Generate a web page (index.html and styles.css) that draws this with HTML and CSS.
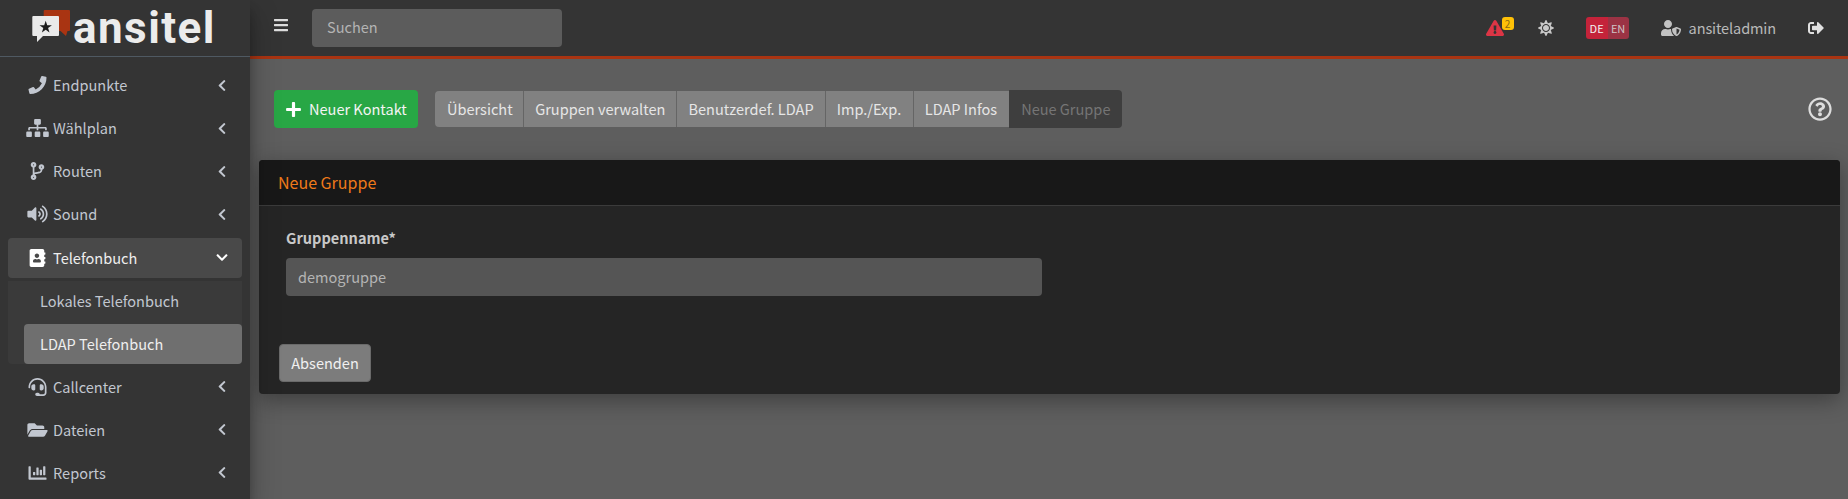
FILE: index.html
```html
<!DOCTYPE html>
<html lang="de">
<head>
<meta charset="utf-8">
<title>ansitel</title>
<link rel="stylesheet" href="styles.css">
</head>
<body>
<svg class="defs" aria-hidden="true">
  <symbol id="i-phone" viewBox="0 0 512 512"><path transform="matrix(-1 0 0 1 512 0)" d="M497.39 361.8l-112-48a24 24 0 0 0-28 6.9l-49.6 60.6A370.66 370.66 0 0 1 130.6 204.11l60.6-49.6a23.94 23.94 0 0 0 6.9-28l-48-112A24.16 24.16 0 0 0 122.6.61l-104 24A24 24 0 0 0 0 48c0 256.5 207.9 464 464 464a24 24 0 0 0 23.4-18.6l24-104a24.29 24.29 0 0 0-14.01-27.6z"/></symbol>
  <symbol id="i-sitemap" viewBox="0 0 640 512"><path d="M128 352H32c-17.67 0-32 14.33-32 32v96c0 17.67 14.33 32 32 32h96c17.67 0 32-14.33 32-32v-96c0-17.67-14.33-32-32-32zm-24-80h192v48h48v-48h192v48h48v-57.59c0-21.17-17.23-38.41-38.41-38.41H344v-64h40c17.67 0 32-14.33 32-32V32c0-17.67-14.33-32-32-32H256c-17.67 0-32 14.33-32 32v96c0 17.67 14.33 32 32 32h40v64H94.41C73.23 224 56 241.23 56 262.41V320h48v-48zm264 80h-96c-17.67 0-32 14.33-32 32v96c0 17.67 14.33 32 32 32h96c17.67 0 32-14.33 32-32v-96c0-17.67-14.33-32-32-32zm240 0h-96c-17.67 0-32 14.33-32 32v96c0 17.67 14.33 32 32 32h96c17.67 0 32-14.33 32-32v-96c0-17.67-14.33-32-32-32z"/></symbol>
  <symbol id="i-branch" viewBox="0 0 384 512"><path d="M384 144c0-44.2-35.8-80-80-80s-80 35.8-80 80c0 36.4 24.3 67.1 57.5 76.8-.6 16.1-4.2 28.5-11 36.9-15.4 19.2-49.3 22.4-85.2 25.7-28.2 2.6-57.4 5.4-81.3 16.9v-144c32.5-10.2 56-40.5 56-76.3 0-44.2-35.8-80-80-80S0 35.8 0 80c0 35.8 23.5 66.1 56 76.3v199.3C23.5 365.9 0 396.2 0 432c0 44.2 35.8 80 80 80s80-35.8 80-80c0-34-21.2-63.1-51.2-74.6 3.1-5.2 7.8-9.8 14.9-13.4 16.2-8.2 40.4-10.4 66.1-12.8 42.2-3.9 90-8.4 118.2-43.4 14-17.4 21.1-39.8 21.6-67.9 31.6-10.8 54.4-40.7 54.4-75.9zM80 64c8.8 0 16 7.2 16 16s-7.2 16-16 16-16-7.2-16-16 7.2-16 16-16zm0 384c-8.8 0-16-7.2-16-16s7.2-16 16-16 16 7.2 16 16-7.2 16-16 16zm224-320c8.8 0 16 7.2 16 16s-7.2 16-16 16-16-7.2-16-16 7.2-16 16-16z"/></symbol>
  <symbol id="i-volume" viewBox="0 0 576 512"><path d="M215.03 71.05L126.06 160H24c-13.26 0-24 10.74-24 24v144c0 13.25 10.74 24 24 24h102.06l88.97 88.95c15.03 15.03 40.97 4.47 40.97-16.97V88.02c0-21.46-25.96-32-40.97-16.97zm233.32-51.08c-11.17-7.33-26.18-4.24-33.51 6.95-7.34 11.17-4.22 26.18 6.95 33.51 66.27 43.49 105.82 116.6 105.82 195.58 0 78.98-39.55 152.09-105.82 195.58-11.17 7.32-14.29 22.34-6.95 33.5 7.04 10.71 21.93 14.56 33.51 6.95C528.27 439.58 576 351.33 576 256S528.27 72.43 448.35 19.97zM480 256c0-63.53-32.06-121.94-85.77-156.24-11.19-7.14-26.03-3.82-33.12 7.46s-3.78 26.21 7.41 33.36C408.27 165.97 432 209.11 432 256s-23.73 90.03-63.48 115.42c-11.19 7.14-14.5 22.07-7.41 33.36 6.51 10.36 21.12 15.14 33.12 7.46C447.94 377.94 480 319.54 480 256zm-141.77-76.87c-11.58-6.33-26.19-2.16-32.61 9.45-6.39 11.61-2.16 26.2 9.45 32.61C327.98 228.28 336 241.63 336 256c0 14.38-8.02 27.72-20.92 34.81-11.61 6.41-15.84 21-9.45 32.61 6.43 11.66 21.05 15.8 32.61 9.45 28.23-15.55 45.77-45 45.77-76.88s-17.54-61.32-45.78-76.86z"/></symbol>
  <symbol id="i-book" viewBox="0 0 448 512"><path d="M436 160c6.6 0 12-5.4 12-12v-40c0-6.6-5.4-12-12-12h-20V48c0-26.5-21.5-48-48-48H48C21.5 0 0 21.5 0 48v416c0 26.5 21.5 48 48 48h320c26.5 0 48-21.5 48-48v-48h20c6.6 0 12-5.4 12-12v-40c0-6.6-5.4-12-12-12h-20v-64h20c6.6 0 12-5.4 12-12v-40c0-6.6-5.4-12-12-12h-20v-64h20zm-228-32c35.3 0 64 28.7 64 64s-28.7 64-64 64-64-28.7-64-64 28.7-64 64-64zm112 236.8c0 10.6-10 19.2-22.4 19.2H118.4C106 384 96 375.4 96 364.8v-19.2c0-31.8 30.1-57.6 67.2-57.6h5c12.3 5.1 25.7 8 39.8 8s27.6-2.9 39.8-8h5c37.1 0 67.2 25.8 67.2 57.6v19.2z"/></symbol>
  <symbol id="i-headset" viewBox="0 0 512 512"><path d="M192 208c0-17.67-14.33-32-32-32h-16c-35.35 0-64 28.65-64 64v48c0 35.35 28.65 64 64 64h16c17.67 0 32-14.33 32-32V208zm176 144c35.35 0 64-28.65 64-64v-48c0-35.35-28.65-64-64-64h-16c-17.67 0-32 14.33-32 32v112c0 17.67 14.33 32 32 32h16zM256 0C113.18 0 4.58 118.83 0 256v16c0 8.84 7.16 16 16 16h16c8.84 0 16-7.16 16-16v-16c0-114.69 93.31-208 208-208s208 93.31 208 208h-.12c.08 2.43.12 165.72.12 165.72 0 23.35-18.93 42.28-42.28 42.28H320c0-26.51-21.49-48-48-48h-32c-26.51 0-48 21.49-48 48s21.49 48 48 48h181.72c49.86 0 90.28-40.42 90.28-90.28V256C507.42 118.83 398.82 0 256 0z"/></symbol>
  <symbol id="i-folder" viewBox="0 0 576 512"><path d="M572.694 292.093L500.27 416.248A63.997 63.997 0 0 1 444.989 448H45.025c-18.523 0-30.064-20.093-20.731-36.093l72.424-124.155A64 64 0 0 1 152 256h399.964c18.523 0 30.064 20.093 20.73 36.093zM152 224h328v-48c0-26.51-21.49-48-48-48H272l-64-64H48C21.49 64 0 85.49 0 112v278.046l69.077-118.418C86.214 242.25 117.989 224 152 224z"/></symbol>
  <symbol id="i-chart" viewBox="0 0 512 512"><path d="M332.8 320h38.4c6.4 0 12.8-6.4 12.8-12.8V172.8c0-6.4-6.4-12.8-12.8-12.8h-38.4c-6.4 0-12.8 6.4-12.8 12.8v134.4c0 6.4 6.4 12.8 12.8 12.8zm96 0h38.4c6.4 0 12.8-6.4 12.8-12.8V76.8c0-6.4-6.4-12.8-12.8-12.8h-38.4c-6.4 0-12.8 6.4-12.8 12.8v230.4c0 6.4 6.4 12.8 12.8 12.8zm-288 0h38.4c6.4 0 12.8-6.4 12.8-12.8v-70.4c0-6.4-6.4-12.8-12.8-12.8h-38.4c-6.4 0-12.8 6.4-12.8 12.8v70.4c0 6.4 6.4 12.8 12.8 12.8zm96 0h38.4c6.4 0 12.8-6.4 12.8-12.8V108.8c0-6.4-6.4-12.8-12.8-12.8h-38.4c-6.4 0-12.8 6.4-12.8 12.8v198.4c0 6.4 6.4 12.8 12.8 12.8zM496 384H64V80c0-8.84-7.16-16-16-16H16C7.16 64 0 71.16 0 80v336c0 17.67 14.33 32 32 32h464c8.84 0 16-7.16 16-16v-32c0-8.84-7.16-16-16-16z"/></symbol>
  <symbol id="i-left" viewBox="0 0 320 512"><path d="M34.52 239.03L228.87 44.69c9.37-9.37 24.57-9.37 33.94 0l22.67 22.67c9.36 9.36 9.37 24.52.04 33.9L131.49 256l154.02 154.75c9.34 9.38 9.32 24.54-.04 33.9l-22.67 22.67c-9.37 9.37-24.57 9.37-33.94 0L34.52 272.97c-9.37-9.37-9.37-24.57 0-33.94z"/></symbol>
  <symbol id="i-down" viewBox="0 0 448 512"><path d="M207.029 381.476L12.686 187.132c-9.373-9.373-9.373-24.569 0-33.941l22.667-22.667c9.357-9.357 24.522-9.375 33.901-.04L224 284.505l154.745-154.021c9.379-9.335 24.544-9.317 33.901.04l22.667 22.667c9.373 9.373 9.373 24.569 0 33.941L240.971 381.476c-9.373 9.372-24.569 9.372-33.942 0z"/></symbol>
  <symbol id="i-bars" viewBox="0 0 448 512"><path d="M16 132h416c8.837 0 16-7.163 16-16V76c0-8.837-7.163-16-16-16H16C7.163 60 0 67.163 0 76v40c0 8.837 7.163 16 16 16zm0 160h416c8.837 0 16-7.163 16-16v-40c0-8.837-7.163-16-16-16H16c-8.837 0-16 7.163-16 16v40c0 8.837 7.163 16 16 16zm0 160h416c8.837 0 16-7.163 16-16v-40c0-8.837-7.163-16-16-16H16c-8.837 0-16 7.163-16 16v40c0 8.837 7.163 16 16 16z"/></symbol>
  <symbol id="i-plus" viewBox="0 0 448 512"><path d="M416 208H272V64c0-17.67-14.33-32-32-32h-32c-17.67 0-32 14.33-32 32v144H32c-17.67 0-32 14.33-32 32v32c0 17.67 14.33 32 32 32h144v144c0 17.67 14.33 32 32 32h32c17.67 0 32-14.33 32-32V304h144c17.67 0 32-14.33 32-32v-32c0-17.67-14.33-32-32-32z"/></symbol>
  <symbol id="i-warn" viewBox="0 0 576 512"><path d="M569.517 440.013C587.975 472.007 564.806 512 527.94 512H48.054c-36.937 0-59.999-40.055-41.577-71.987L246.423 23.985c18.467-32.009 64.72-31.951 83.154 0l239.94 416.028zM288 354c-25.405 0-46 20.595-46 46s20.595 46 46 46 46-20.595 46-46-20.595-46-46-46zm-43.673-165.346l7.418 136c.347 6.364 5.609 11.346 11.982 11.346h48.546c6.373 0 11.635-4.982 11.982-11.346l7.418-136c.375-6.874-5.098-12.654-11.982-12.654h-63.383c-6.884 0-12.356 5.78-11.981 12.654z"/></symbol>
  <symbol id="i-sun" viewBox="0 0 512 512"><path d="M256 160c-52.9 0-96 43.1-96 96s43.1 96 96 96 96-43.1 96-96-43.1-96-96-96zm246.4 80.5l-94.7-47.3 33.5-100.4c4.5-13.6-8.4-26.5-21.9-21.9l-100.4 33.5-47.4-94.8c-6.4-12.8-24.6-12.8-31 0l-47.3 94.7L92.7 70.8c-13.6-4.5-26.5 8.4-21.9 21.9l33.5 100.4-94.7 47.4c-12.8 6.4-12.8 24.6 0 31l94.7 47.3-33.5 100.5c-4.5 13.6 8.4 26.5 21.9 21.9l100.4-33.5 47.3 94.7c6.4 12.8 24.6 12.8 31 0l47.3-94.7 100.4 33.5c13.6 4.5 26.5-8.4 21.9-21.9l-33.5-100.4 94.7-47.3c13-6.5 13-24.7.2-31.1zm-155.9 106c-49.9 49.9-131.1 49.9-181 0-49.9-49.9-49.9-131.1 0-181 49.9-49.9 131.1-49.9 181 0 49.9 49.9 49.9 131.1 0 181z"/></symbol>
  <symbol id="i-user" viewBox="0 0 640 512"><path d="M622.3 271.1l-115.2-45c-4.1-1.6-12.6-3.7-22.2 0l-115.2 45c-10.7 4.2-17.7 14-17.7 24.9 0 111.6 68.7 188.8 132.9 213.9 9.6 3.7 18 1.6 22.2 0C558.4 489.9 640 420.5 640 296c0-10.9-7-20.7-17.7-24.9zM496 462.4V273.3l95.5 37.3c-5.6 87.1-60.9 135.4-95.5 151.8zM224 256c70.7 0 128-57.3 128-128S294.7 0 224 0 96 57.3 96 128s57.3 128 128 128zm96 40c0-2.5.8-4.8 1.1-7.2-2.5-.1-4.9-.8-7.5-.8h-16.7c-22.2 10.2-46.9 16-72.9 16s-50.6-5.8-72.9-16h-16.7C60.2 288 0 348.2 0 422.4V464c0 26.5 21.5 48 48 48h352c6.8 0 13.3-1.5 19.1-4-54-42.9-99.1-116.7-99.1-212z"/></symbol>
  <symbol id="i-out" viewBox="0 0 512 512"><path d="M497 273L329 441c-15 15-41 4.5-41-17v-96H152c-13.3 0-24-10.7-24-24v-96c0-13.3 10.7-24 24-24h136V88c0-21.4 25.9-32 41-17l168 168c9.3 9.4 9.3 24.6 0 34zM192 436v-40c0-6.6-5.4-12-12-12H96c-17.7 0-32-14.3-32-32V160c0-17.7 14.3-32 32-32h84c6.6 0 12-5.4 12-12V76c0-6.6-5.4-12-12-12H96c-53 0-96 43-96 96v192c0 53 43 96 96 96h84c6.6 0 12-5.4 12-12z"/></symbol>
  <symbol id="i-help" viewBox="0 0 512 512"><path d="M256 8C119.043 8 8 119.083 8 256c0 136.997 111.043 248 248 248s248-111.003 248-248C504 119.083 392.957 8 256 8zm0 448c-110.532 0-200-89.431-200-200 0-110.495 89.472-200 200-200 110.491 0 200 89.471 200 200 0 110.53-89.431 200-200 200zm107.244-255.2c0 67.052-72.421 68.084-72.421 92.863V300c0 6.627-5.373 12-12 12h-45.647c-6.627 0-12-5.373-12-12v-8.659c0-35.745 27.1-50.034 47.579-61.516 17.561-9.845 28.324-16.541 28.324-29.579 0-17.246-21.999-28.693-39.784-28.693-23.189 0-33.894 10.977-48.942 29.969-4.057 5.12-11.46 6.071-16.666 2.124l-27.824-21.098c-5.107-3.872-6.251-11.066-2.644-16.363C184.846 131.491 214.94 112 261.794 112c49.071 0 101.45 38.304 101.45 88.8zM298 368c0 23.159-18.841 42-42 42s-42-18.841-42-42 18.841-42 42-42 42 18.841 42 42z"/></symbol>
</svg>
<div class="app">
  <aside class="sidebar">
    <a class="brand">
      <svg class="brand-mark" viewBox="0 0 40 34">
        <path class="mark-back" d="M12.7 0H37a1 1 0 0 1 1 1v19a1 1 0 0 1-1 1h-1.5l-1.5 5-5.5-5H11.7V1a1 1 0 0 1 1-1z"/>
        <path class="mark-front" d="M1.3 6H26a1 1 0 0 1 1 1v18a1 1 0 0 1-1 1H11l-6 6v-6H1.3a1 1 0 0 1-1-1V7a1 1 0 0 1 1-1z"/>
        <polygon class="mark-star" points="13.7,10.8 15.2,15.3 19.9,15.3 16.1,18.1 17.5,22.6 13.7,19.8 9.9,22.6 11.3,18.1 7.5,15.3 12.2,15.3"/>
      </svg>
      <span class="brand-text">ansitel</span>
    </a>
    <nav class="menu">
      <a class="menu-link"><svg class="menu-icon"><use href="#i-phone"/></svg><span class="menu-text">Endpunkte</span><svg class="chev"><use href="#i-left"/></svg></a>
      <a class="menu-link"><svg class="menu-icon"><use href="#i-sitemap"/></svg><span class="menu-text">Wählplan</span><svg class="chev"><use href="#i-left"/></svg></a>
      <a class="menu-link"><svg class="menu-icon"><use href="#i-branch"/></svg><span class="menu-text">Routen</span><svg class="chev"><use href="#i-left"/></svg></a>
      <a class="menu-link"><svg class="menu-icon"><use href="#i-volume"/></svg><span class="menu-text">Sound</span><svg class="chev"><use href="#i-left"/></svg></a>
      <a class="menu-link open"><svg class="menu-icon"><use href="#i-book"/></svg><span class="menu-text">Telefonbuch</span><svg class="chev-down"><use href="#i-down"/></svg></a>
      <div class="submenu">
        <a class="sub-link">Lokales Telefonbuch</a>
        <a class="sub-link active">LDAP Telefonbuch</a>
      </div>
      <a class="menu-link"><svg class="menu-icon"><use href="#i-headset"/></svg><span class="menu-text">Callcenter</span><svg class="chev"><use href="#i-left"/></svg></a>
      <a class="menu-link"><svg class="menu-icon"><use href="#i-folder"/></svg><span class="menu-text">Dateien</span><svg class="chev"><use href="#i-left"/></svg></a>
      <a class="menu-link"><svg class="menu-icon"><use href="#i-chart"/></svg><span class="menu-text">Reports</span><svg class="chev"><use href="#i-left"/></svg></a>
    </nav>
  </aside>
  <div class="main">
    <header class="topbar">
      <svg class="burger"><use href="#i-bars"/></svg>
      <div class="search">Suchen</div>
      <div class="top-right">
        <div class="alert">
          <svg class="alert-icon"><use href="#i-warn"/></svg>
          <span class="badge">2</span>
        </div>
        <svg class="sun"><use href="#i-sun"/></svg>
        <div class="lang"><span class="lang-on">DE</span><span class="lang-off">EN</span></div>
        <svg class="user-icon"><use href="#i-user"/></svg>
        <span class="user-name">ansiteladmin</span>
        <svg class="logout"><use href="#i-out"/></svg>
      </div>
    </header>
    <main class="content">
      <div class="toolbar">
        <a class="btn-add"><svg class="plus"><use href="#i-plus"/></svg>Neuer Kontakt</a>
        <div class="btn-group">
          <a class="tab">Übersicht</a>
          <a class="tab">Gruppen verwalten</a>
          <a class="tab">Benutzerdef. LDAP</a>
          <a class="tab">Imp./Exp.</a>
          <a class="tab">LDAP Infos</a>
          <a class="tab disabled">Neue Gruppe</a>
        </div>
        <svg class="help"><use href="#i-help"/></svg>
      </div>
      <section class="card">
        <h3 class="card-title">Neue Gruppe</h3>
        <div class="card-body">
          <label class="field-label">Gruppenname*</label>
          <div class="field">demogruppe</div>
        </div>
        <div class="card-footer"><a class="btn-submit">Absenden</a></div>
      </section>
    </main>
  </div>
</div>
</body>
</html>
```

FILE: styles.css
```css
* { box-sizing: border-box; }
html, body { margin: 0; height: 100%; overflow: hidden; }
body {
  font-family: "Noto Sans CJK JP", "Noto Sans", sans-serif;
  font-size: 14.55px;
  line-height: 24px;
  color: #d8d8d8;
  background: #5e5e5e;
}
.defs { display: none; }
svg { fill: currentColor; display: block; flex: none; }

.app { display: flex; height: 100vh; }

/* sidebar */
.sidebar {
  width: 250px;
  flex: none;
  background: #343434;
  position: relative;
  z-index: 2;
  box-shadow: 0 14px 28px rgba(0,0,0,.25), 0 10px 10px rgba(0,0,0,.22);
}
.brand {
  height: 57px;
  border-bottom: 1px solid #4f5962;
  display: flex;
  align-items: flex-start;
  padding: 10px 0 0 32px;
}
.brand-mark { width: 40px; height: 34px; }
.mark-back { fill: #a93412; }
.mark-front { fill: #eaeaea; }
.mark-star { fill: #1b1b1b; }
.brand-text {
  font-family: "Roboto", "Liberation Sans", sans-serif;
  font-weight: 700;
  font-size: 44px;
  line-height: 36px;
  color: #ececec;
  margin-left: 1px;
  letter-spacing: 1.45px;
}
.menu { padding: 8.13px 8px 0; display: flex; flex-direction: column; gap: 3.1px; }
.menu-link {
  height: 40px;
  flex: none;
  display: flex;
  align-items: center;
  padding-left: 18px;
  border-radius: 4px;
  color: #c2c7d0;
}
.menu-icon { width: 23px; height: 18px; margin-right: 4px; }
.menu-text { flex: 1; }
.chev { width: 12px; height: 13px; margin-right: 14px; }
.chev-down { width: 12px; height: 13px; margin-right: 14px; color: #fff; }
.menu-link.open { background: #494949; color: #eee; }
.menu-link.open .menu-icon { color: #fff; }
.submenu {
  display: flex;
  flex-direction: column;
  gap: 3.1px;
  background: #3a3a3a;
  padding-left: 16px;
  border-radius: 0 0 4px 4px;
}
.sub-link {
  height: 40px;
  flex: none;
  display: flex;
  align-items: center;
  padding-left: 16px;
  border-radius: 4px;
  color: #c2c7d0;
}
.sub-link.active { background: #6f6f6f; color: #eee; }

/* main */
.main { flex: 1; min-width: 0; display: flex; flex-direction: column; }
.topbar {
  height: 59px;
  flex: none;
  background: #343434;
  border-bottom: 3px solid #a93412;
  display: flex;
  align-items: center;
  padding: 0 24px;
}
.burger { width: 14px; height: 16px; color: #ddd; margin-top: -7px; }
.search {
  width: 250px;
  height: 38px;
  margin-left: 24px;
  background: #5c5c5c;
  border-radius: 4px;
  padding: 6px 15px;
  color: #b4b4b4;
}
.top-right { margin-left: auto; display: flex; align-items: center; }
.alert { position: relative; width: 18px; height: 16px; }
.alert-icon { width: 18px; height: 16px; color: #dc3545; }
.badge {
  position: absolute;
  left: 16px;
  top: -3px;
  width: 12px;
  height: 13px;
  background: #ffc107;
  color: #8b6d12;
  border-radius: 3px;
  font-size: 10px;
  line-height: 13px;
  text-align: center;
}
.sun { width: 16px; height: 16px; color: #c8c8c8; margin-left: 34px; }
.lang {
  display: flex;
  height: 22px;
  margin-left: 32px;
  border-radius: 3px;
  overflow: hidden;
  font-size: 11px;
  line-height: 22px;
}
.lang-on { width: 22px; text-align: center; background: #c4233a; color: #f2f2f2; }
.lang-off { width: 21px; text-align: center; background: #9b3344; color: #d0c4c6; }
.user-icon { width: 20px; height: 16px; color: #c2c2c2; margin-left: 32px; }
.user-name { margin-left: 8px; color: #b9b9b9; letter-spacing: -0.125px; }
.logout { width: 16px; height: 16px; color: #e0e0e0; margin-left: 32px; }

.content { flex: 1; padding: 31px 8px 0 9px; }
.toolbar { display: flex; align-items: center; padding-left: 15px; height: 38px; }
.btn-add {
  height: 38px;
  width: 144px;
  display: flex;
  align-items: center;
  padding-left: 12px;
  background: #28a745;
  border-radius: 4px;
  color: #f4f4f4;
}
.plus { width: 15px; height: 17px; color: #fff; margin-right: 8px; }
.btn-group { display: flex; margin-left: 17px; height: 38px; align-items: center; }
.tab {
  height: 36px;
  display: flex;
  align-items: center;
  padding: 0 11px;
  background: #818181;
  color: #e6e6e6;
  border-left: 1px solid #656565;
}
.tab:first-child { border-left: 0; border-radius: 4px 0 0 4px; padding: 0 10.5px 0 12px; }
.tab:nth-child(4) { padding-right: 11.5px; }
.tab:nth-child(5) { padding-right: 12px; }
.tab.disabled {
  height: 38px;
  background: #3e3e3e;
  color: #757575;
  border-left: 0;
  padding: 0 12px;
  border-radius: 0 4px 4px 0;
}
.help { width: 24px; height: 24px; margin-left: auto; margin-right: 8px; color: #ddd; }

.card {
  margin-top: 32px;
  background: #252525;
  border-radius: 4px;
  box-shadow: 0 6px 22px rgba(0,0,0,.35);
  overflow: hidden;
}
.card-title {
  margin: 0;
  height: 46px;
  background: #181818;
  border-bottom: 1px solid #3b3b3b;
  padding: 10px 19px;
  font-size: 16px;
  font-weight: 400;
  color: #ef7a1a;
}
.card-body { padding: 20px 27px 0; height: 126px; }
.field-label { display: block; font-weight: 700; color: #c8c8c8; height: 32px; line-height: 24px; }
.field {
  width: 756px;
  height: 38px;
  background: #555;
  border-radius: 4px;
  padding: 7px 12px;
  color: #b4b4b4;
}
.card-footer { padding: 12px 20px; height: 62px; }
.btn-submit {
  display: flex;
  align-items: center;
  justify-content: center;
  width: 92px;
  height: 38px;
  background: #7c7c7c;
  border: 1px solid #6a6a6a;
  border-radius: 4px;
  color: #f0f0f0;
}
```
